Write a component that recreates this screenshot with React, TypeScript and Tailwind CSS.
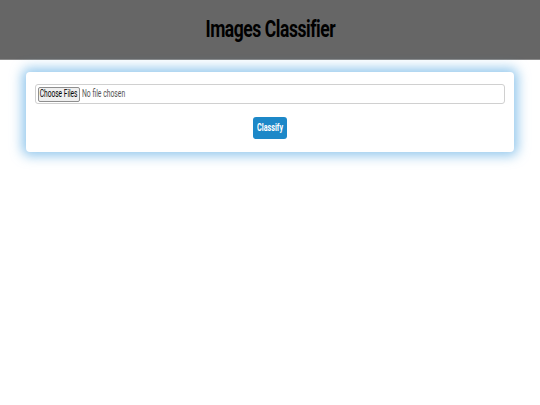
import React from "react";

export default function App() {
  return (
    <div className="w-[540px] h-[405px] bg-white overflow-hidden" style={{ fontFamily: "Roboto, 'Liberation Sans', sans-serif" }}>
      <header className="h-[60px] bg-[#666666] border-b border-[#8a8a8a] flex items-center justify-center">
        <h1 className="text-[23px] font-bold text-black leading-none inline-block scale-x-[0.76] tracking-tight">
          Images Classifier
        </h1>
      </header>
      <div className="px-[26px] pt-[12px]">
        <div className="h-[80px] bg-white rounded-[4px] shadow-[0_0_12px_4px_rgba(80,165,225,0.6)] px-[9px] pt-[12px] flex flex-col items-center">
          <div className="w-full h-[20px] border border-[#d0d0d0] rounded-[3px] flex items-center pl-[2px]">
            <div className="h-[15px] w-[42px] bg-[#efefef] border border-[#8f8f8f] rounded-[2px] flex items-center justify-center overflow-hidden">
              <span className="text-[10px] text-black leading-none inline-block scale-x-[0.66] whitespace-nowrap">Choose Files</span>
            </div>
            <span className="text-[10px] text-[#555] leading-none inline-block scale-x-[0.68] origin-left whitespace-nowrap ml-[2px]">No file chosen</span>
          </div>
          <button className="mt-[13px] h-[22px] w-[34px] bg-[#1d88c8] rounded-[3px] flex items-center justify-center overflow-hidden">
            <span className="text-[10px] font-bold text-white leading-none inline-block scale-x-[0.72] whitespace-nowrap">Classify</span>
          </button>
        </div>
      </div>
    </div>
  );
}
